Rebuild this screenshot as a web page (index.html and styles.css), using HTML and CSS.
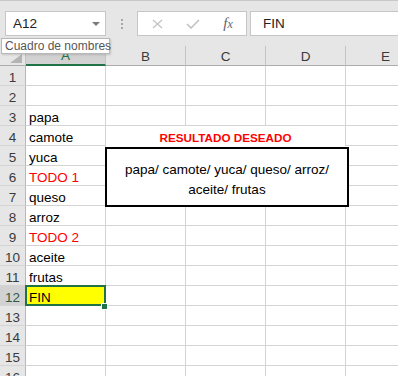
FILE: index.html
```html
<!DOCTYPE html>
<html lang="es">
<head>
    <meta charset="UTF-8">
    <title>Hoja de cálculo</title>
    <link rel="stylesheet" href="styles.css">
</head>
<body>
    <div class="app">
        <div class="toolbar">
            <div class="namebox"><span>A12</span><span class="caret"></span></div>
            <div class="grip"><span></span><span></span><span></span></div>
            <div class="fxbar">
                <span class="btn"><svg width="11" height="10" viewBox="0 0 11 10"><path d="M1 1 L10 9 M10 1 L1 9" stroke="#c2c2c2" stroke-width="1.3" fill="none"/></svg></span>
                <span class="btn"><svg width="14" height="10" viewBox="0 0 14 10"><path d="M1 5 L5 9 L13 1" stroke="#c2c2c2" stroke-width="1.6" fill="none"/></svg></span>
                <span class="btn fx">f<span class="x">x</span></span>
            </div>
            <div class="formula">FIN</div>
        </div>

        <div class="tip">Cuadro de nombres</div>

        <div class="sheet">
            <div class="ch corner"></div>
            <div class="ch sel">A</div>
            <div class="ch">B</div>
            <div class="ch">C</div>
            <div class="ch">D</div>
            <div class="ch">E</div>

            <div class="title">RESULTADO DESEADO</div>
            <div class="result">papa/ camote/ yuca/ queso/ arroz/ aceite/ frutas</div>

            <div class="rh">1</div><div class="c"></div><div class="c"></div><div class="c"></div><div class="c"></div><div class="c"></div>
            <div class="rh">2</div><div class="c"></div><div class="c"></div><div class="c"></div><div class="c"></div><div class="c"></div>
            <div class="rh">3</div><div class="c">papa</div><div class="c"></div><div class="c"></div><div class="c"></div><div class="c"></div>
            <div class="rh">4</div><div class="c">camote</div><div class="c"></div>
            <div class="rh">5</div><div class="c">yuca</div><div class="c"></div>
            <div class="rh">6</div><div class="c red">TODO 1</div><div class="c"></div>
            <div class="rh">7</div><div class="c">queso</div><div class="c"></div>
            <div class="rh">8</div><div class="c">arroz</div><div class="c"></div><div class="c"></div><div class="c"></div><div class="c"></div>
            <div class="rh">9</div><div class="c red">TODO 2</div><div class="c"></div><div class="c"></div><div class="c"></div><div class="c"></div>
            <div class="rh">10</div><div class="c">aceite</div><div class="c"></div><div class="c"></div><div class="c"></div><div class="c"></div>
            <div class="rh">11</div><div class="c">frutas</div><div class="c"></div><div class="c"></div><div class="c"></div><div class="c"></div>
            <div class="rh sel">12</div><div class="c sel">FIN</div><div class="c"></div><div class="c"></div><div class="c"></div><div class="c"></div>
            <div class="rh">13</div><div class="c"></div><div class="c"></div><div class="c"></div><div class="c"></div><div class="c"></div>
            <div class="rh">14</div><div class="c"></div><div class="c"></div><div class="c"></div><div class="c"></div><div class="c"></div>
            <div class="rh">15</div><div class="c"></div><div class="c"></div><div class="c"></div><div class="c"></div><div class="c"></div>
            <div class="rh">16</div><div class="c"></div><div class="c"></div><div class="c"></div><div class="c"></div><div class="c"></div>
        </div>
    </div>
</body>
</html>
```

FILE: styles.css
```css
* {
    box-sizing: border-box;
}

body {
    margin: 0;
    font-family: "Liberation Sans", Arial, sans-serif;
    background: #fff;
    color: #000;
    overflow: hidden;
}

.app {
    position: relative;
    width: 398px;
    height: 376px;
    overflow: hidden;
}

/* barra de fórmulas */
.toolbar {
    height: 46px;
    background: #e6e6e6;
    border-top: 1px solid #c8c8c8;
    display: flex;
    align-items: flex-start;
    padding: 10px 0 0 5px;
}

.namebox {
    width: 101px;
    height: 25px;
    background: #fff;
    border: 1px solid #c6c6c6;
    display: flex;
    align-items: center;
    justify-content: space-between;
    padding: 0 5px 0 7px;
    font-size: 13.5px;
    color: #222;
}

.caret {
    border-left: 4px solid transparent;
    border-right: 4px solid transparent;
    border-top: 4px solid #7a7a7a;
}

.grip {
    width: 31px;
    height: 25px;
    display: flex;
    flex-direction: column;
    align-items: center;
    gap: 2px;
    padding-top: 8px;
}

.grip span {
    width: 2px;
    height: 2px;
    background: #a8a8a8;
}

.fxbar {
    width: 110px;
    height: 25px;
    background: #fff;
    border: 1px solid #c6c6c6;
    display: flex;
    align-items: center;
    padding-left: 2px;
}

.btn {
    width: 35px;
    display: flex;
    justify-content: center;
    align-items: center;
}

.fx {
    font-family: "Liberation Serif", "Times New Roman", serif;
    font-style: italic;
    font-size: 15px;
    color: #666;
    padding-left: 1px;
}

.fx .x {
    font-size: 12px;
    position: relative;
    top: 1px;
}

.formula {
    flex: 1;
    height: 25px;
    margin-left: 3px;
    background: #fff;
    border: 1px solid #c6c6c6;
    border-right: 0;
    padding-left: 12px;
    display: flex;
    align-items: center;
    font-size: 13.5px;
    color: #222;
}

.tip {
    position: absolute;
    left: 1px;
    top: 38px;
    width: 109px;
    height: 16px;
    background: #fff;
    border: 1px solid #b8b8b8;
    box-shadow: 1px 1px 2px rgba(0, 0, 0, 0.15);
    font-size: 12px;
    line-height: 14px;
    color: #575757;
    padding-left: 3px;
    white-space: nowrap;
    z-index: 5;
}

/* hoja */
.sheet {
    display: grid;
    grid-template-columns: 26px repeat(5, 80px);
    grid-auto-rows: 20px;
}

.ch,
.rh {
    background: #e6e6e6;
    text-align: center;
    font-size: 13.5px;
    line-height: 19px;
    color: #3a3a3a;
    border-right: 1px solid #c4c4c4;
}

.ch {
    border-bottom: 1px solid #adadad;
    padding-top: 1px;
}

.rh {
    border-bottom: 1px solid #d4d4d4;
    border-right-color: #b8b8b8;
    padding-top: 2px;
}

.ch.sel {
    background: #d2d2d2;
    border-bottom: 2px solid #217346;
    color: #217346;
    line-height: 18px;
}

.rh.sel {
    background: #d2d2d2;
    color: #2f5b46;
}

.corner {
    position: relative;
}

.corner::after {
    content: "";
    position: absolute;
    right: 3px;
    bottom: 2px;
    border-left: 12px solid transparent;
    border-bottom: 9px solid #b4b4b4;
}

.c {
    border-right: 1px solid #d4d4d4;
    border-bottom: 1px solid #d4d4d4;
    font-size: 13.5px;
    line-height: 20px;
    padding: 2px 0 0 3px;
    white-space: nowrap;
}

.red {
    color: #ff0000;
}

.c.sel {
    position: relative;
    background: #ffff00;
}

.c.sel::before {
    content: "";
    position: absolute;
    top: -1px;
    left: -1px;
    right: -1px;
    bottom: -1px;
    border: 2px solid #217346;
}

.c.sel::after {
    content: "";
    position: absolute;
    right: -2px;
    bottom: -4px;
    width: 5px;
    height: 5px;
    background: #217346;
    outline: 1px solid #fff;
}

.title {
    grid-column: 3 / span 3;
    grid-row: 5;
    text-align: center;
    color: #ff0000;
    font-weight: bold;
    font-size: 11.7px;
    line-height: 21px;
    padding-top: 1px;
    border-right: 1px solid #d4d4d4;
}

.result {
    grid-column: 3 / span 3;
    grid-row: 6 / span 3;
    margin: 1px -3px -1px -1px;
    border: 2px solid #000;
    background: #fff;
    display: flex;
    align-items: center;
    justify-content: center;
    text-align: center;
    font-size: 13.5px;
    line-height: 20px;
    padding: 6px 8px 0;
    position: relative;
    z-index: 1;
}
```
